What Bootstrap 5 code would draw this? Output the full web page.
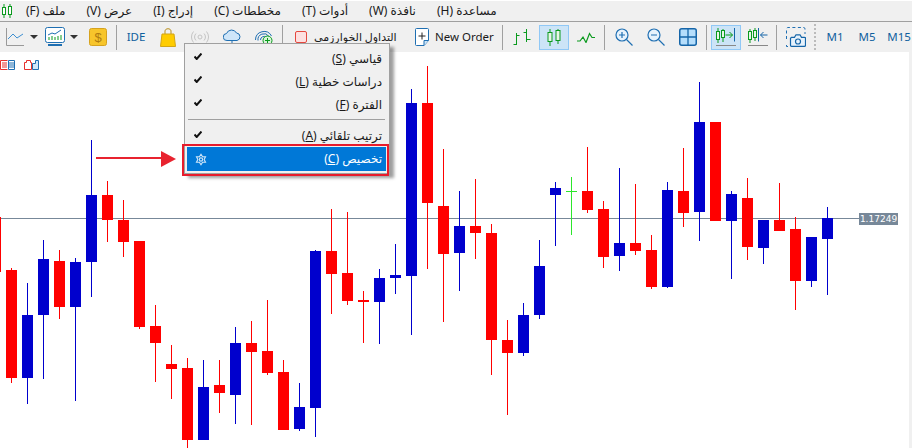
<!DOCTYPE html>
<html lang="ar">
<head>
  <meta charset="UTF-8" />
  <title>MetaTrader</title>
  <link href="https://cdn.jsdelivr.net/npm/bootstrap@5.3.3/dist/css/bootstrap.min.css" rel="stylesheet">
  <script src="https://cdn.jsdelivr.net/npm/bootstrap@5.3.3/dist/js/bootstrap.bundle.min.js"></script>
  <style>
    body { background: #f0f0f0; font-family: "Noto Sans", "DejaVu Sans", sans-serif; font-size: 12px; color: #1a1a1a; overflow: hidden; }
    .app-shell { height: 448px; }

    .menu-bar { height: 22px; flex: none; border-top: 1px solid #fff; border-bottom: 1px solid #a0a0a0; }
    .menu-logo { width: 26px; padding-left: 1px; }
    .menu-entry { margin-right: 21px; white-space: nowrap; line-height: 20px; }

    .tool-bar { height: 30px; flex: none; padding-left: 3px; }
    .tb-btn { width: 30px; height: 25px; margin-right: 2px; flex: none; border: 1px solid transparent; }
    .tb-btn.is-on { background: #cce4f7; border-color: #90c8f6; }
    .tb-narrow { width: 24px; margin-right: 0; }
    .tb-caret { width: 0; height: 0; margin: 0 5px 0 3px; border-left: 4px solid transparent; border-right: 4px solid transparent; border-top: 4px solid #333; flex: none; }
    .tb-sep { width: 1px; height: 25px; background: #a0a0a0; flex: none; margin: 0 4px 0 1px; }
    .tb-grip { width: 2px; height: 26px; flex: none; margin: 0 4px 0 1px; border-left: 2px dotted #bbb; }
    .tb-text { color: #0f5f9e; font-size: 11.5px; }
    .tb-algo { width: 124px; padding-left: 8px; height: 25px; flex: none; }
    .tb-algo span { white-space: nowrap; margin-left: 7px; font-size: 11px; }
    .tb-order { width: 90px; height: 25px; flex: none; }
    .tb-order span { margin-left: 6px; font-size: 11.5px; white-space: nowrap; }

    .chart-wrap { flex: 1 1 auto; margin-right: 3px; background: #fff; min-height: 0; }
    .chart-svg { display: block; width: 909px; height: 396px; }
    .chart-tabs { left: 0; top: 8px; }
    .price-tag { left: 859px; top: 161px; width: 39px; height: 12px; background: #778899; color: #fff; font: 9px/12px "DejaVu Sans", sans-serif; text-align: center; }

    .ctx-menu { display: block; left: 184px; top: 43px; width: 206px; height: 131px; padding: 3px 3px 2px 2px; border: 1px solid #a0a0a0; border-radius: 0; background: #f0f0f0; box-shadow: 4px 4px 3px rgba(0,0,0,.38); min-width: 0; font-size: 12px; z-index: 5; }
    .ctx-item { height: 23px; padding: 0 4px 0 7px; color: #1a1a1a; }
    .ctx-item.is-short { height: 22px; }
    .ctx-item.is-sel { height: 24px; background: #0078d7; color: #fff; padding-left: 8px; }
    .ctx-rule { height: 9px; padding-top: 3px; }
    .ctx-rule hr { margin: 0 1px; border-top: 1px solid #a0a0a0; opacity: 1; }
    .ctx-frame { left: 182px; top: 144px; width: 207px; height: 32px; border: 2px solid #e81c2c; z-index: 6; pointer-events: none; }
    .ctx-arrow { left: 96px; top: 150px; z-index: 6; }
  </style>
</head>
<body>
  <div class="app-shell d-flex flex-column position-relative">

    <!-- menu -->
    <div class="menu-bar d-flex align-items-center">
      <div class="menu-logo d-flex">
        <svg width="12" height="14" viewBox="0 0 12 14" fill="none" stroke="#0a9a1e"><path d="M3 0v14M9 0v14"/><rect x="1.500" y="3.500" width="3" height="7" fill="#fff"/><rect x="7.500" y="2.500" width="3" height="8" fill="#fff"/></svg>
      </div>
      <bdi class="menu-entry" dir="rtl">ملف (F)</bdi>
      <bdi class="menu-entry" dir="rtl">عرض (V)</bdi>
      <bdi class="menu-entry" dir="rtl">إدراج (I)</bdi>
      <bdi class="menu-entry" dir="rtl">مخططات (C)</bdi>
      <bdi class="menu-entry" dir="rtl">أدوات (T)</bdi>
      <bdi class="menu-entry" dir="rtl">نافذة (W)</bdi>
      <bdi class="menu-entry" dir="rtl">مساعدة (H)</bdi>
    </div>

    <!-- toolbar -->
    <div class="tool-bar d-flex align-items-center">
      <div class="tb-btn tb-narrow d-flex align-items-center justify-content-center">
        <svg width="18" height="18" viewBox="0 0 18 18" fill="none"><path d="M.5 0v17.500H18" stroke="#999"/><path d="M2 11l5-5 4 4 6-4" stroke="#3d8fd1"/></svg>
      </div>
      <span class="tb-caret"></span>
      <div class="tb-btn tb-narrow d-flex align-items-center justify-content-center">
        <svg width="20" height="20" viewBox="0 0 20 20" fill="none"><rect x=".5" y=".5" width="19" height="15" rx="2" fill="#fff" stroke="#1f6fb2"/><path d="M3 8l4-2 3 1 6-4" stroke="#1f6fb2"/><path d="M4 10v3M7 9v4M10 10v3M13 9v4M16 8v5" stroke="#0a9a1e"/><path d="M3 18h14" stroke="#1f6fb2" stroke-width="2"/></svg>
      </div>
      <span class="tb-caret"></span>
      <div class="tb-btn d-flex align-items-center justify-content-center">
        <svg width="18" height="18" viewBox="0 0 18 18"><rect x=".5" y=".5" width="17" height="17" rx="2" fill="#f7c52b" stroke="#d6a21e"/><text x="9" y="14" text-anchor="middle" font-size="13" font-family="Liberation Sans" fill="#b07c10">$</text></svg>
      </div>
      <span class="tb-sep"></span>
      <div class="tb-btn d-flex align-items-center justify-content-center tb-text">IDE</div>
      <div class="tb-btn d-flex align-items-center justify-content-center">
        <svg width="16" height="19" viewBox="0 0 16 19" fill="none"><path d="M5 6V3c0-3 6-3 6 0v3" stroke="#b98f1d"/><path d="M2 6h12l1.500 12.500H.5z" fill="#ffcc00" stroke="#d3a514"/></svg>
      </div>
      <div class="tb-btn d-flex align-items-center justify-content-center">
        <svg width="18" height="12" viewBox="0 0 18 12" fill="none" stroke="#c4c4c4"><circle cx="9" cy="6" r="2"/><path d="M5 2.500a5 5 0 0 0 0 7M13 2.500a5 5 0 0 1 0 7M2.500 .5a8.500 8.500 0 0 0 0 11M15.500 .5a8.500 8.500 0 0 1 0 11"/></svg>
      </div>
      <div class="tb-btn d-flex align-items-center justify-content-center">
        <svg width="18" height="18" viewBox="0 0 18 18" fill="none" stroke="#1f6fb2"><path d="M4 12.500a3.500 3.500 0 0 1-.5-7A5.500 5.500 0 0 1 13.500 5a3.800 3.800 0 0 1 .5 7.500z" fill="#cfe6f9"/><path d="M9 12.500V18"/></svg>
      </div>
      <div class="tb-btn d-flex align-items-center justify-content-center">
        <svg width="18" height="18" viewBox="0 0 18 18" fill="none" stroke="#1f6fb2"><path d="M.5 12a8.500 8.500 0 0 1 16-4M3 12.500a6 6 0 0 1 11-4M5.500 12a3.500 3.500 0 0 1 6-2.500"/><circle cx="12.500" cy="12.500" r="4.500" fill="#d8f5d8" stroke="#0a9a1e"/><path d="M12.500 10v5M10 12.500h5" stroke="#0a9a1e"/></svg>
      </div>
      <span class="tb-sep"></span>
      <div class="tb-algo d-flex align-items-center">
        <svg width="12" height="12" viewBox="0 0 12 12"><rect x=".5" y=".5" width="11" height="11" rx="1.500" fill="#fde0e0" stroke="#e5483f"/></svg>
        <span dir="rtl">التداول الخوارزمي</span>
      </div>
      <div class="tb-order d-flex align-items-center">
        <svg class="ms-1" width="14" height="18" viewBox="0 0 14 18" fill="none"><path d="M1.500 .5h11a1 1 0 0 1 1 1v11l-4.500 5h-7.500a1 1 0 0 1-1-1v-15a1 1 0 0 1 1-1z" fill="#fff" stroke="#1f6fb2"/><path d="M9 17.500v-5h4.500" fill="#cfe6f9" stroke="#1f6fb2"/><path d="M7 4.500v7M3.500 8h7" stroke="#222"/></svg>
        <span>New Order</span>
      </div>
      <span class="tb-sep"></span>
      <div class="tb-btn d-flex align-items-center justify-content-center">
        <svg width="18" height="17" viewBox="0 0 18 17" fill="none" stroke="#0a9a1e"><path d="M3.500 4v12M.5 15.500h3M3.500 6.500h3M13.500 0v13M10.500 3.500h3M13.500 10.500h4"/></svg>
      </div>
      <div class="tb-btn is-on d-flex align-items-center justify-content-center">
        <svg width="14" height="17" viewBox="0 0 14 17" fill="none" stroke="#0a9a1e"><path d="M3 0v17M11 0v15"/><rect x="1" y="3.500" width="4" height="9" fill="#e8f5e8"/><rect x="9" y="1.500" width="4" height="10" fill="#e8f5e8"/></svg>
      </div>
      <div class="tb-btn d-flex align-items-center justify-content-center">
        <svg width="18" height="11" viewBox="0 0 18 11" fill="none" stroke="#0a9a1e" stroke-width="1.200"><path d="M0 9h3l3-4 3 5.500 3.500-9 2.500 4h3"/></svg>
      </div>
      <span class="tb-sep"></span>
      <div class="tb-btn d-flex align-items-center justify-content-center">
        <svg width="18" height="18" viewBox="0 0 18 18" fill="none" stroke="#1f6fb2"><circle cx="7" cy="7" r="6" fill="#e6f2fc" stroke-width="1.200"/><path d="M11.500 11.500l6 6M7 4v6M4 7h6" stroke-width="1.200"/></svg>
      </div>
      <div class="tb-btn d-flex align-items-center justify-content-center">
        <svg width="18" height="18" viewBox="0 0 18 18" fill="none" stroke="#1f6fb2"><circle cx="7" cy="7" r="6" fill="#e6f2fc" stroke-width="1.200"/><path d="M11.500 11.500l6 6M4 7h6" stroke-width="1.200"/></svg>
      </div>
      <div class="tb-btn d-flex align-items-center justify-content-center">
        <svg width="18" height="18" viewBox="0 0 18 18"><rect x=".75" y=".75" width="16.500" height="16.500" rx="2" fill="#b5defc" stroke="#1565a8" stroke-width="1.500"/><path d="M9 1v16M1 9h16" stroke="#1565a8" stroke-width="1.300"/></svg>
      </div>
      <span class="tb-sep"></span>
      <div class="tb-btn is-on d-flex align-items-center justify-content-center">
        <svg width="20" height="19" viewBox="0 0 20 19" fill="none"><path d="M2 0v15M7 1v13" stroke="#0a9a1e"/><rect x=".5" y="3.500" width="3" height="8" fill="#e8f5e8" stroke="#0a9a1e"/><rect x="5.500" y="2.500" width="3" height="7" fill="#e8f5e8" stroke="#0a9a1e"/><path d="M9.500 7h7M13.500 4l3 3-3 3" stroke="#0a9a1e"/><path d="M18.500 0v13.500" stroke="#1565a8"/><path d="M0 17.500h20" stroke="#888"/></svg>
      </div>
      <div class="tb-btn d-flex align-items-center justify-content-center">
        <svg width="20" height="19" viewBox="0 0 20 19" fill="none"><path d="M2 1v14M7 0v13" stroke="#0a9a1e"/><rect x=".5" y="3.500" width="3" height="8" fill="#e8f5e8" stroke="#0a9a1e"/><rect x="5.500" y="2.500" width="3" height="7" fill="#e8f5e8" stroke="#0a9a1e"/><path d="M10.500 0v13.500" stroke="#1565a8"/><path d="M12.500 7h7M15.500 4l-3 3 3 3" stroke="#1565a8"/><path d="M0 17.500h20" stroke="#888"/></svg>
      </div>
      <span class="tb-sep"></span>
      <div class="tb-btn d-flex align-items-center justify-content-center">
        <svg width="20" height="20" viewBox="0 0 20 20" fill="none"><path d="M.5 12V2a1.500 1.500 0 0 1 1.500-1.500h16a1.500 1.500 0 0 1 1 1.500v5M2 19.500H.5V16" stroke="#1f6fb2" stroke-dasharray="3 2.500"/><path d="M5.500 10.500h3l1.500-2.500h4l1.500 2.500h3a1 1 0 0 1 1 1v7a1 1 0 0 1-1 1h-13a1 1 0 0 1-1-1v-7z" fill="#e6f2fc" stroke="#1565a8" stroke-width="1.200" transform="translate(0 -.2)"/><circle cx="12" cy="14.500" r="2.500" stroke="#1565a8" stroke-width="1.200"/></svg>
      </div>
      <span class="tb-grip"></span>
      <div class="tb-btn d-flex align-items-center justify-content-center tb-text">M1</div>
      <div class="tb-btn d-flex align-items-center justify-content-center tb-text">M5</div>
      <div class="tb-btn d-flex align-items-center justify-content-center tb-text">M15</div>
    </div>

    <!-- chart -->
    <div class="chart-wrap position-relative">
      <svg id="chart" class="chart-svg" viewBox="0 52 909 396" shape-rendering="crispEdges"></svg>
      <div class="chart-tabs position-absolute d-flex">
        <svg class="me-1" width="16" height="10" viewBox="0 0 16 10" fill="none"><path d="M7.500 .5H.5v9h7" stroke="#e5302c" fill="#fff"/><path d="M2 3h5M2 5h5M2 7h5" stroke="#e5302c"/><path d="M8.500 .5h6v9h-6z" stroke="#1f6fb2" fill="#fff"/><path d="M9 3h5M9 5h5M9 7h5" stroke="#1f6fb2"/></svg>
        <svg class="ms-1" width="16" height="10" viewBox="0 0 16 10" fill="none"><path d="M7.500 2.500h-1V.5h-4v2h-2v7h7z" stroke="#e5302c" fill="#fff"/><path d="M8.500 9.500h6v-9h-3v3h-3z" stroke="#1f6fb2" fill="#cfe6f9"/></svg>
      </div>
      <div class="price-tag position-absolute">1.17249</div>
    </div>

    <!-- context menu -->
    <div class="ctx-menu dropdown-menu position-absolute">
      <div class="ctx-item d-flex align-items-center justify-content-between">
        <svg width="8" height="7" viewBox="0 0 8 7" class="mb-1" fill="none" stroke="#111" stroke-width="2"><path d="M.5 3.500l2.200 2.500L7.500 .5"/></svg>
        <span dir="rtl">قياسي (<u>S</u>)</span>
      </div>
      <div class="ctx-item d-flex align-items-center justify-content-between">
        <svg width="8" height="7" viewBox="0 0 8 7" class="mb-1" fill="none" stroke="#111" stroke-width="2"><path d="M.5 3.500l2.200 2.500L7.500 .5"/></svg>
        <span dir="rtl">دراسات خطية (<u>L</u>)</span>
      </div>
      <div class="ctx-item d-flex align-items-center justify-content-between">
        <svg width="8" height="7" viewBox="0 0 8 7" class="mb-1" fill="none" stroke="#111" stroke-width="2"><path d="M.5 3.500l2.200 2.500L7.500 .5"/></svg>
        <span dir="rtl">الفترة (<u>F</u>)</span>
      </div>
      <div class="ctx-rule"><hr></div>
      <div class="ctx-item is-short d-flex align-items-center justify-content-between">
        <svg width="8" height="7" viewBox="0 0 8 7" class="mb-1" fill="none" stroke="#111" stroke-width="2"><path d="M.5 3.500l2.200 2.500L7.500 .5"/></svg>
        <span dir="rtl">ترتيب تلقائي (<u>A</u>)</span>
      </div>
      <div class="ctx-item is-sel d-flex align-items-center justify-content-between">
        <svg width="12" height="13" viewBox="0 0 13 13" fill="none" stroke="#cfe6f9" stroke-width="1.200"><path d="M6.500 .8l1.700 2.700 3.200.1-1.500 2.900 1.500 2.900-3.200.1-1.700 2.700-1.700-2.700-3.200-.1 1.500-2.900-1.500-2.900 3.200-.1z"/><circle cx="6.500" cy="6.500" r="1.800"/></svg>
        <span dir="rtl">تخصيص (<u>C</u>)</span>
      </div>
    </div>
    <div class="ctx-frame position-absolute"></div>
    <svg class="ctx-arrow position-absolute" width="80" height="18" viewBox="0 0 80 18"><path d="M0 8h67" stroke="#e8232f" stroke-width="2"/><path d="M65 1l15 8-15 8z" fill="#e8232f"/></svg>
  </div>

  <script>
    // wick top, wick bottom, body top, body bottom per bar, bars are 16px apart
    const B = '#0000cd', R = '#ff0000', G = '#2ce62c';
    const candles = [
      [R,268,383,270,378],[B,283,404,315,378],[B,240,379,259,315],[R,250,319,261,307],[B,258,401,262,307],
      [B,140,297,195,262],[R,181,242,195,220],[R,200,257,220,242],[R,241,329,241,327],[R,305,382,326,343],
      [R,345,399,364,369],[R,358,448,368,440],[B,360,440,387,440],[R,360,413,385,393],[B,327,424,343,395],
      [R,321,425,343,352],[R,300,375,351,373],[R,360,430,372,430],[B,383,431,407,429],[B,250,437,251,408],
      [R,209,314,251,274],[R,212,305,273,301],[R,291,343,300,302],[B,269,344,278,302],[B,244,294,275,278],
      [B,89,335,103,276],[R,66,269,103,203],[R,149,322,206,254],[B,191,291,226,253],[R,179,259,226,233],
      [R,224,375,233,340],[R,320,415,340,353],[B,303,356,315,353],[B,240,319,266,315],[B,182,246,188,195],
      [G,177,235,191,192],[R,147,213,191,210],[R,201,268,209,257],[B,168,271,243,256],[R,184,255,243,251],
      [R,235,289,250,287],[B,182,288,190,287],[R,148,227,191,213],[B,82,241,122,212],[R,122,221,122,221],
      [B,191,279,194,221],[R,178,260,198,247],[B,220,264,220,248],[R,183,231,220,231],[R,217,310,229,281],
      [B,237,287,237,281],[B,207,295,218,239]
    ];

    const chart = document.getElementById('chart');
    function addRect(x, y, w, h, fill) {
      const r = document.createElementNS('http://www.w3.org/2000/svg', 'rect');
      r.setAttribute('x', x);
      r.setAttribute('y', y);
      r.setAttribute('width', w);
      r.setAttribute('height', h);
      r.setAttribute('fill', fill);
      chart.appendChild(r);
    }

    // price line goes under the candles, the cut off bar sits on the left edge
    addRect(0, 218, 859, 1, '#778899');
    addRect(0, 217, 1, 55, R);
    candles.forEach((c, i) => {
      const x = 11 + i * 16;
      addRect(x, c[1], 1, c[2] - c[1], c[0]);
      addRect(x - 5, c[3], 11, Math.max(c[4] - c[3], 1), c[0]);
    });
  </script>
</body>
</html>
